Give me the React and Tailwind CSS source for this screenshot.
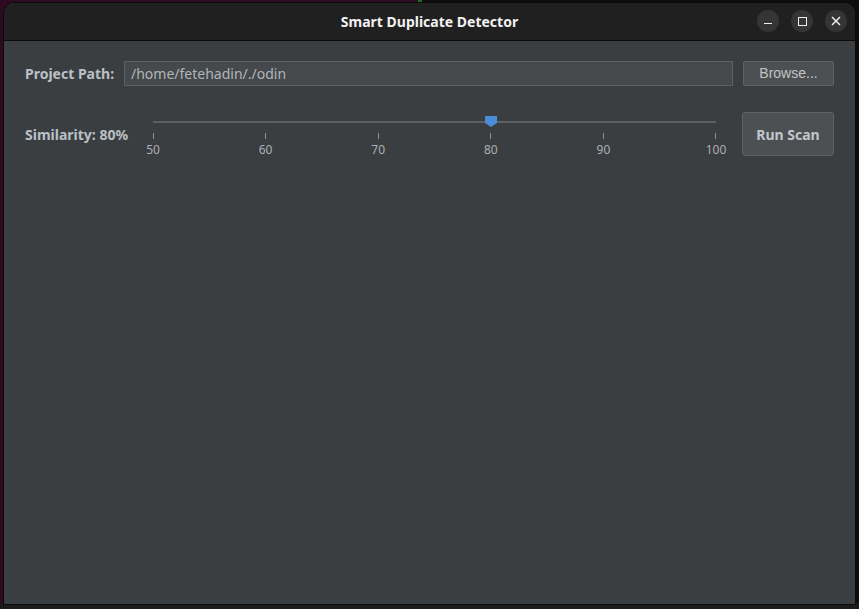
import React from "react";

const ticks = [50, 60, 70, 80, 90, 100];

function Handle() {
  return (
    <svg width="12" height="11" viewBox="0 0 12 11" className="absolute top-[-5px]" style={{ left: `${6 + 0.6 * 563 - 6}px` }}>
      <polygon points="0,0 12,0 12,7 6,11 0,7" fill="#4a8dd6" />
    </svg>
  );
}

export default function App() {
  return (
    <div className="relative w-[859px] h-[609px] overflow-hidden bg-[#111111] font-['Noto_Sans',sans-serif]">
      <div className="absolute inset-0 flex">
        <div className="w-[418px] h-full bg-[#2c0a20]" />
        <div className="w-[4px] h-full bg-[#1d6b2a]" />
        <div className="flex-1 h-full bg-[#0d0d0d]" />
      </div>
      <div className="absolute left-0 right-0 bottom-0 h-[6px] bg-[#1b1b1b]" />

      <div className="absolute left-[4px] top-[3px] w-[851px] h-[601px] rounded-t-[11px] overflow-hidden flex flex-col bg-[#3b3e41] shadow-[0_0_0_1px_#0a0a0a]">
        <div className="h-[38px] shrink-0 bg-[#202020] border-b border-[#0c0c0c] relative flex items-center justify-center">
          <span className="text-[14px] font-bold text-[#f2f2f2]">Smart Duplicate Detector</span>
          <div className="absolute right-[8px] top-[7px] flex gap-[12px]">
            <div className="w-[22px] h-[22px] rounded-full bg-[#353535] flex items-center justify-center">
              <div className="w-[8px] h-[1.5px] bg-[#eeeeee] mt-[5px]" />
            </div>
            <div className="w-[22px] h-[22px] rounded-full bg-[#353535] flex items-center justify-center">
              <div className="w-[9px] h-[9px] border-[1.5px] border-[#eeeeee]" />
            </div>
            <div className="w-[22px] h-[22px] rounded-full bg-[#353535] flex items-center justify-center">
              <svg width="10" height="10" viewBox="0 0 10 10">
                <path d="M1 1 L9 9 M9 1 L1 9" stroke="#eeeeee" strokeWidth="1.5" />
              </svg>
            </div>
          </div>
        </div>

        <div className="flex flex-col px-[21px] pt-[20px] gap-[26px]">
          <div className="flex items-center h-[25px]">
            <span className="text-[14px] font-bold text-[#b9c0c6] w-[99px] shrink-0">Project Path:</span>
            <div className="flex-1 h-[25px] bg-[#45494c] border border-[#5d6164] flex items-center px-[6px]">
              <span className="text-[14px] text-[#b0b5ba]">/home/fetehadin/./odin</span>
            </div>
            <div className="ml-[10px] w-[91px] h-[25px] bg-[#4d5053] border border-[#5f6265] rounded-[2px] flex items-center justify-center">
              <span className="text-[14px] text-[#c4c4c4] font-['Liberation_Sans',sans-serif]">Browse...</span>
            </div>
          </div>

          <div className="flex items-center h-[44px]">
            <span className="text-[14px] font-bold text-[#b9c0c6] w-[122px] shrink-0">Similarity: 80%</span>
            <div className="relative w-[575px] h-[44px] shrink-0">
              <div className="absolute left-[6px] right-[6px] top-[9px] h-[2px] bg-[#5c6063]" />
              <div className="absolute left-0 right-0 top-[9px]">
                <div className="relative">
                  <Handle />
                </div>
              </div>
              <div className="absolute left-[6px] right-[6px] top-[21px] flex justify-between">
                {ticks.map((t) => (
                  <div key={t} className="w-0 flex flex-col items-center">
                    <div className="w-[1px] h-[6px] bg-[#8c9094] shrink-0" />
                    <span className="mt-[4px] text-[12px] leading-[14px] text-[#aab0b6]">{t}</span>
                  </div>
                ))}
              </div>
            </div>
            <div className="ml-auto w-[92px] h-[44px] bg-[#4d5053] border border-[#5f6265] rounded-[3px] flex items-center justify-center">
              <span className="text-[14px] font-bold text-[#c2c6ca]">Run Scan</span>
            </div>
          </div>
        </div>
      </div>
    </div>
  );
}
